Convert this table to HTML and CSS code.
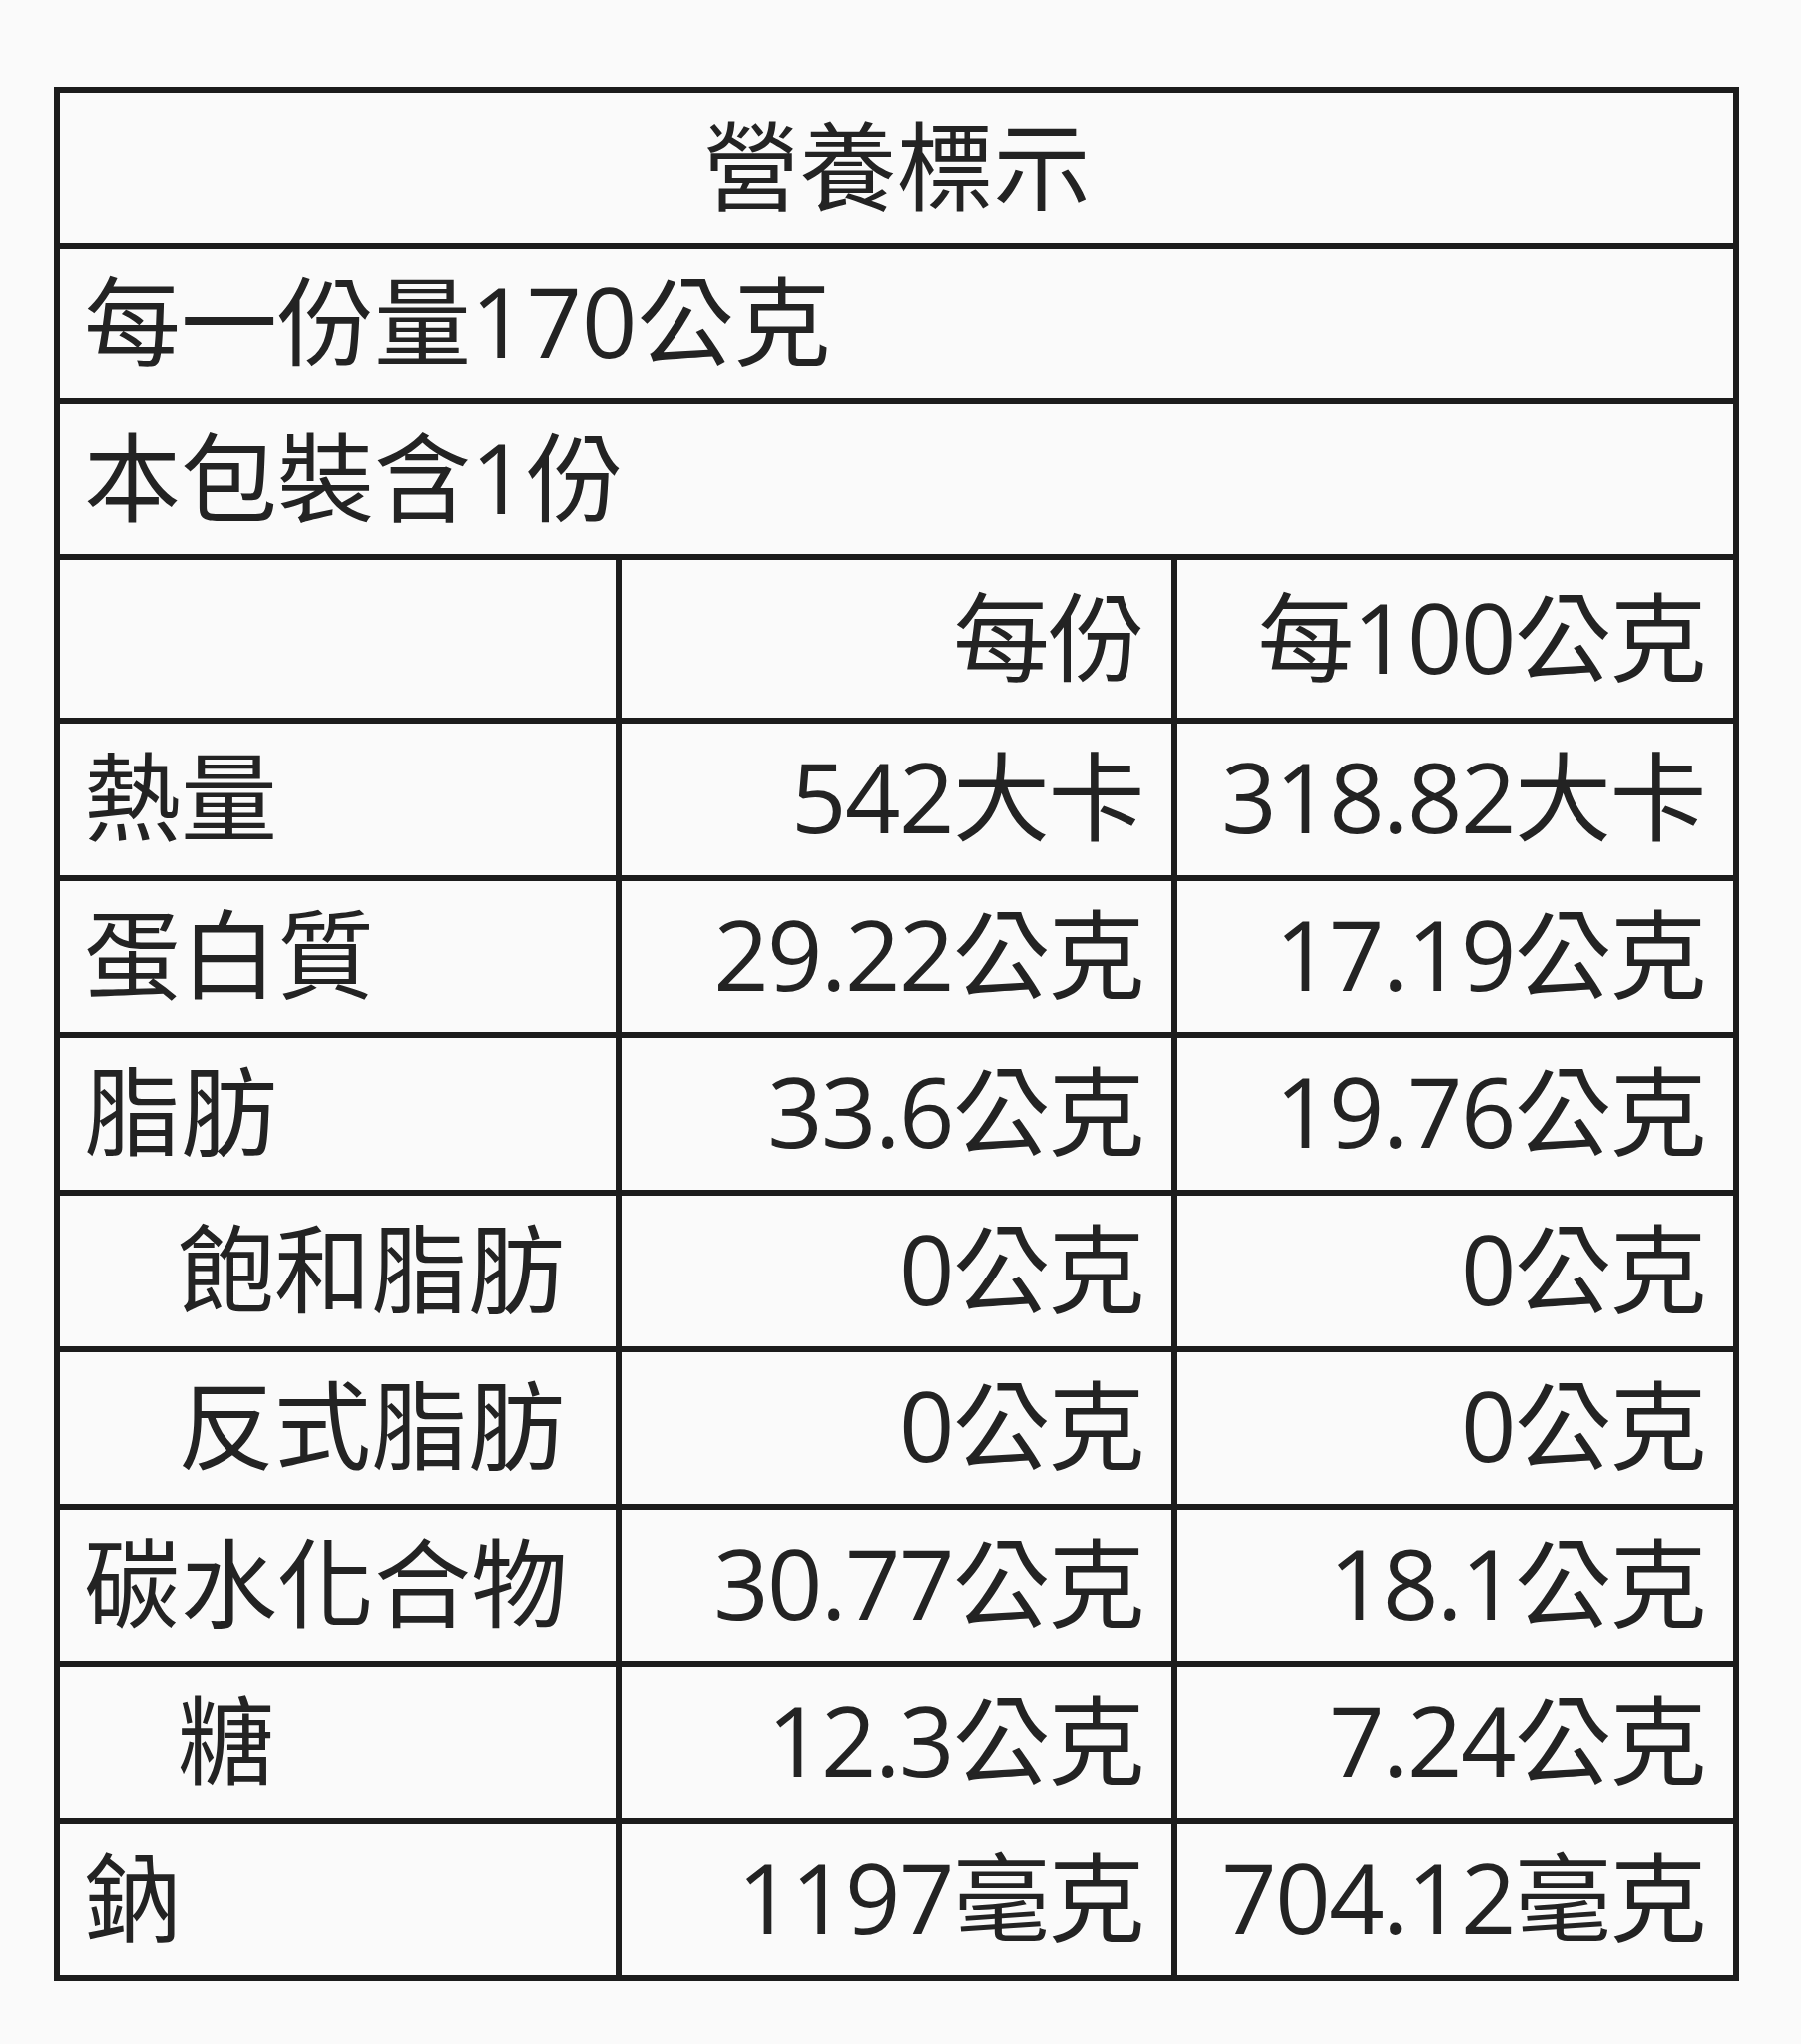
FILE: index.html
```html
<!DOCTYPE html>
<html lang="zh-Hant">
<head>
<meta charset="utf-8">
<title>營養標示</title>
<link rel="stylesheet" href="styles.css">
</head>
<body>
<div class="label">
  <div class="cell full title">營養標示</div>
  <div class="cell full">每一份量170公克</div>
  <div class="cell full">本包裝含1份</div>

  <div class="cell"></div>
  <div class="cell num">每份</div>
  <div class="cell num">每100公克</div>

  <div class="cell">熱量</div>
  <div class="cell num">542大卡</div>
  <div class="cell num">318.82大卡</div>

  <div class="cell">蛋白質</div>
  <div class="cell num">29.22公克</div>
  <div class="cell num">17.19公克</div>

  <div class="cell">脂肪</div>
  <div class="cell num">33.6公克</div>
  <div class="cell num">19.76公克</div>

  <div class="cell sub">飽和脂肪</div>
  <div class="cell num">0公克</div>
  <div class="cell num">0公克</div>

  <div class="cell sub">反式脂肪</div>
  <div class="cell num">0公克</div>
  <div class="cell num">0公克</div>

  <div class="cell">碳水化合物</div>
  <div class="cell num">30.77公克</div>
  <div class="cell num">18.1公克</div>

  <div class="cell sub">糖</div>
  <div class="cell num">12.3公克</div>
  <div class="cell num">7.24公克</div>

  <div class="cell">鈉</div>
  <div class="cell num">1197毫克</div>
  <div class="cell num">704.12毫克</div>
</div>
</body>
</html>
```

FILE: styles.css
```css
html, body {
  margin: 0;
  padding: 0;
  background: #fafafa;
}

body {
  padding: 87px 0 0 54px;
  font-family: "Open Sans", "Noto Sans CJK TC", sans-serif;
  color: #232323;
}

.label {
  width: 1689px;
  box-sizing: border-box;
  display: grid;
  grid-template-columns: 557px 551px 557px;
  grid-template-rows: 150px 150px 150px 158px repeat(8, 151.5px);
  gap: 6px;
  padding: 6px;
  background: #1c1c1c;
}

.cell {
  background: #fafafa;
  display: flex;
  align-items: center;
  padding: 0 30px 6px 24px;
  font-size: 97px;
  line-height: 1;
  white-space: nowrap;
  overflow: hidden;
}

.full {
  grid-column: 1 / -1;
}

.title {
  justify-content: center;
  padding-left: 0;
  padding-right: 0;
}

.num {
  justify-content: flex-end;
  letter-spacing: -1.5px;
  padding-right: 28px;
}

.sub {
  padding-left: 118px;
}
```
